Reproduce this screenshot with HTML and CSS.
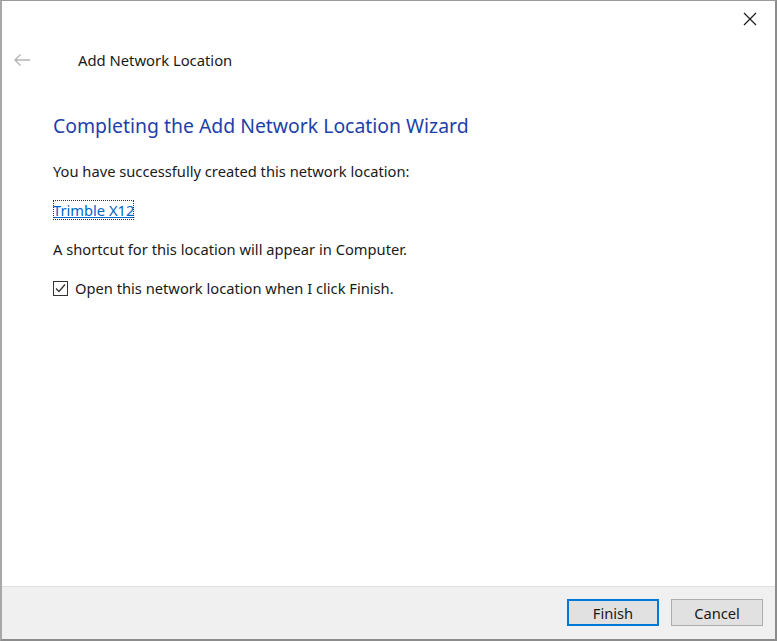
FILE: index.html
```html
<!DOCTYPE html>
<html>
<head>
<meta charset="utf-8">
<link rel="stylesheet" href="styles.css">
</head>
<body>
<div class="window">
  <div class="main">
    <div class="titlebar">
      <div class="close">
        <svg width="14" height="14" viewBox="0 0 14 14"><path d="M1 1 L13 13 M13 1 L1 13" stroke="#1a1a1a" stroke-width="1.2" fill="none"/></svg>
      </div>
    </div>
    <div class="header">
      <svg class="back" width="18" height="14" viewBox="0 0 18 14"><path d="M17 7 H2 M7.5 1.5 L2 7 L7.5 12.5" stroke="#b4b4b4" stroke-width="1.4" fill="none"/></svg>
      <span class="wtitle">Add Network Location</span>
    </div>
    <div class="content">
      <h1 class="heading">Completing the Add Network Location Wizard</h1>
      <p class="line">You have successfully created this network location:</p>
      <p class="line"><a class="link">Trimble X12</a></p>
      <p class="line">A shortcut for this location will appear in Computer.</p>
      <label class="check">
        <span class="box"><svg width="13" height="13" viewBox="0 0 13 13"><path d="M2 6.5 L5 9.5 L11 2.5" stroke="#333" stroke-width="1.3" fill="none"/></svg></span>
        <span>Open this network location when I click Finish.</span>
      </label>
    </div>
  </div>
  <div class="footer">
    <button class="btn primary">Finish</button>
    <button class="btn">Cancel</button>
  </div>
</div>
</body>
</html>
```
FILE: styles.css
```css
html, body {
  margin: 0;
  padding: 0;
  background: #ffffff;
}
body {
  width: 777px;
  height: 641px;
  font-family: "Segoe UI", "Noto Sans", "Open Sans", sans-serif;
  color: #000;
}
.window {
  box-sizing: border-box;
  width: 777px;
  height: 641px;
  border-top: 1px solid #9a9a9a;
  border-left: 2px solid #a8a8a8;
  border-right: 2px solid #8c8c8c;
  border-bottom: 2px solid #8c8c8c;
  display: flex;
  flex-direction: column;
  background: #fff;
}
.main {
  flex: 1;
  display: flex;
  flex-direction: column;
}
.titlebar {
  height: 36px;
  display: flex;
  justify-content: flex-end;
}
.close {
  width: 46px;
  height: 36px;
  display: flex;
  align-items: center;
  justify-content: center;
  margin-right: 2px;
}
.header {
  display: flex;
  align-items: center;
  height: 46px;
  padding-left: 11px;
}
.back {
  margin-right: 47px;
}
.wtitle {
  font-size: 14.8px;
  color: #1a1a1a;
}
.content {
  padding-left: 51px;
  padding-top: 30px;
}
.heading {
  margin: 0 0 22px 0;
  font-size: 19.4px;
  font-weight: normal;
  color: #1e3faa;
  line-height: 26px;
}
.line {
  margin: 0 0 19px 0;
  font-size: 14.7px;
  line-height: 20px;
  color: #1a1a1a;
}
.link {
  color: #0066cc;
  text-decoration: underline;
  outline: 1px dotted #333;
  outline-offset: -1px;
}
.check {
  display: flex;
  align-items: center;
  font-size: 14.7px;
  line-height: 20px;
  color: #1a1a1a;
}
.box {
  width: 13px;
  height: 13px;
  border: 1px solid #333;
  margin-right: 7px;
  display: flex;
  align-items: center;
  justify-content: center;
}
.footer {
  background: #f0f0f0;
  border-top: 1px solid #dfdfdf;
  display: flex;
  justify-content: flex-end;
  align-items: flex-start;
  padding-top: 12px;
  padding-right: 12px;
  gap: 12px;
  box-sizing: border-box;
  height: 53px;
}
.btn {
  box-sizing: border-box;
  width: 92px;
  height: 27px;
  background: #e1e1e1;
  border: 1px solid #adadad;
  font-family: inherit;
  font-size: 14.7px;
  color: #1a1a1a;
  padding: 0;
}
.btn.primary {
  border: 2px solid #0078d7;
}
```
